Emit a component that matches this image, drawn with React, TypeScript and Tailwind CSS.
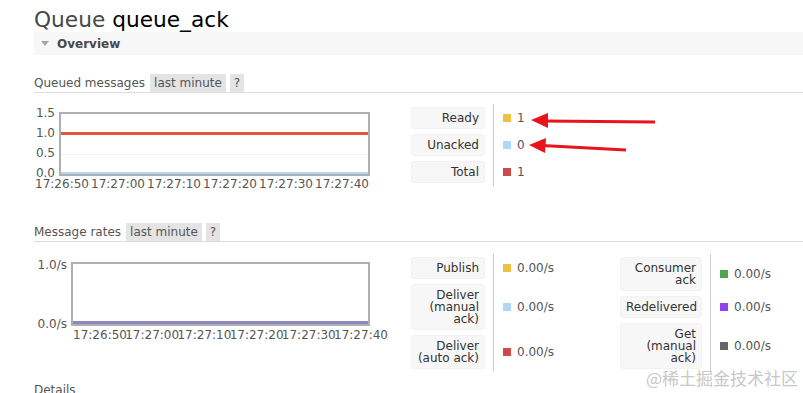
import React from "react";

const Chip = ({ children }: { children: React.ReactNode }) => (
  <span className="bg-[#e4e4e4] px-[4px] h-[18px] leading-[18px] text-[#555]">{children}</span>
);

const SectionHeader = ({ title, mt }: { title: string; mt: string }) => (
  <div className={`${mt} ml-[34px] flex items-center gap-[4px] border-b border-[#dddddd]`}>
    <span className="mr-[1px] text-[#555]">{title}</span>
    <Chip>last minute</Chip>
    <Chip>?</Chip>
  </div>
);

const Label = ({ lines, h }: { lines: string[]; h: string }) => (
  <div
    className={`col-start-1 ${h} bg-[#f7f7f7] rounded-[3px] px-[5px] py-[4px] text-right leading-[12px] text-[#333] shadow-[0_0_0_1px_#f2f2f2]`}
  >
    {lines.map((l, i) => (
      <div key={i} className="h-[12px]">
        {l}
      </div>
    ))}
  </div>
);

const Value = ({ color, text }: { color: string; text: string }) => (
  <div className="col-start-3 flex items-center gap-[6px] text-[#555]">
    <span className={`w-[8px] h-[8px] ${color}`} />
    <span>{text}</span>
  </div>
);

const xlabels = ["17:26:50", "17:27:00", "17:27:10", "17:27:20", "17:27:30", "17:27:40"];

export default function App() {
  return (
    <div className="relative w-[803px] h-[393px] overflow-hidden bg-white font-['DejaVu_Sans',Verdana,sans-serif] text-[12px] text-[#484848]">
      <h1 className="pt-[7px] pl-[34px] text-[21.7px] leading-[25px] font-normal">
        <span className="text-[#484848]">Queue </span>
        <span className="text-black">queue_ack</span>
      </h1>

      <div className="ml-[34px] h-[23px] bg-[#f7f7f7] flex items-center">
        <svg className="ml-[7px]" width="8" height="6" viewBox="0 0 8 6">
          <polygon points="0,0 8,0 4,5" fill="#a6a6a6" />
        </svg>
        <span className="ml-[8px] font-bold text-[#484848]">Overview</span>
      </div>

      <SectionHeader title="Queued messages" mt="mt-[19px]" />

      <div className="mt-[11px] ml-[34px] flex">
        <div className="relative w-[378px] h-[90px]">
          {["1.5", "1.0", "0.5", "0.0"].map((t, i) => (
            <div
              key={t}
              className="absolute left-0 w-[21px] text-right leading-[11px] text-[#555]"
              style={{ top: [4, 24, 44, 64][i] }}
            >
              {t}
            </div>
          ))}
          <div className="absolute left-[25px] top-[8px] w-[311px] h-[64px] border-2 border-[#b0b0b0]">
            <div className="absolute left-0 right-0 top-[40px] h-px bg-[#f3f3f3]" />
            <div className="absolute left-0 right-0 top-[18px] h-[3px] bg-[#e0573f]" />
            <div className="absolute left-0 right-0 bottom-0 h-[2px] bg-[#afd8f8]" />
          </div>
          {xlabels.map((t, i) => (
            <div
              key={t}
              className="absolute w-[56px] text-center leading-[11px] text-[#555]"
              style={{ left: i * 56, top: 75 }}
            >
              {t}
            </div>
          ))}
        </div>

        <div className="py-[4px]">
          <div className="grid grid-cols-[72px_1px_auto] gap-x-[9px] gap-y-[7px]">
            <div className="col-start-2 row-start-1 row-span-3 bg-[#cccccc] -mt-[4px] -mb-[4px]" />
            <Label lines={["Ready"]} h="h-[20px]" />
            <Value color="bg-[#edc240]" text="1" />
            <Label lines={["Unacked"]} h="h-[20px]" />
            <Value color="bg-[#afd8f8]" text="0" />
            <Label lines={["Total"]} h="h-[20px]" />
            <Value color="bg-[#cb4b4b]" text="1" />
          </div>
        </div>
      </div>

      <SectionHeader title="Message rates" mt="mt-[29px]" />

      <div className="mt-[12px] ml-[34px] flex">
        <div className="relative w-[378px] h-[120px]">
          {["1.0/s", "0.0/s"].map((t, i) => (
            <div
              key={t}
              className="absolute left-0 w-[33px] text-right leading-[12px] text-[#555]"
              style={{ top: [5, 64][i] }}
            >
              {t}
            </div>
          ))}
          <div className="absolute left-[37px] top-[8px] w-[299px] h-[64px] border-2 border-[#b0b0b0]">
            <div className="absolute left-0 right-0 bottom-0 h-[3px] bg-[#8c88c4]" />
          </div>
          {xlabels.map((t, i) => (
            <div
              key={t}
              className="absolute w-[56px] text-center leading-[12px] text-[#555]"
              style={{ left: 38 + i * 52.2, top: 75 }}
            >
              {t}
            </div>
          ))}
        </div>

        <div className="flex">
          <div className="w-[209px] py-[4px]">
            <div className="grid grid-cols-[72px_1px_auto] gap-x-[9px] gap-y-[7px]">
              <div className="col-start-2 row-start-1 row-span-3 bg-[#cccccc] -mt-[4px] -mb-[3px]" />
              <Label lines={["Publish"]} h="h-[20px]" />
              <Value color="bg-[#edc240]" text="0.00/s" />
              <Label lines={["Deliver", "(manual", "ack)"]} h="h-[44px]" />
              <Value color="bg-[#afd8f8]" text="0.00/s" />
              <Label lines={["Deliver", "(auto ack)"]} h="h-[32px]" />
              <Value color="bg-[#cb4b4b]" text="0.00/s" />
            </div>
          </div>
          <div className="py-[4px]">
            <div className="grid grid-cols-[80px_1px_auto] gap-x-[9px] gap-y-[7px]">
              <div className="col-start-2 row-start-1 row-span-3 bg-[#cccccc] -mt-[4px] -mb-[4px]" />
              <Label lines={["Consumer", "ack"]} h="h-[32px]" />
              <Value color="bg-[#4da74d]" text="0.00/s" />
              <Label lines={["Redelivered"]} h="h-[20px]" />
              <Value color="bg-[#9440ed]" text="0.00/s" />
              <Label lines={["Get", "(manual", "ack)"]} h="h-[44px]" />
              <Value color="bg-[#666666]" text="0.00/s" />
            </div>
          </div>
        </div>
      </div>

      <div className="mt-[9px] ml-[34px] leading-[14px] text-[#555]">Details</div>

      <div className="absolute left-[646px] top-[367px] text-[17px] leading-[22px] text-[#c8c8c8] font-['Noto_Sans_CJK_SC',sans-serif]">
        @稀土掘金技术社区
      </div>

      <svg className="absolute left-0 top-0 pointer-events-none" width="803" height="393">
        <line x1="655" y1="122" x2="544" y2="121" stroke="#e8141c" strokeWidth="3" />
        <polygon points="531,120 548,113 548,128" fill="#e8141c" />
        <line x1="626" y1="150" x2="542" y2="145.5" stroke="#e8141c" strokeWidth="3" />
        <polygon points="529,145 546,138 545,153" fill="#e8141c" />
      </svg>
    </div>
  );
}
